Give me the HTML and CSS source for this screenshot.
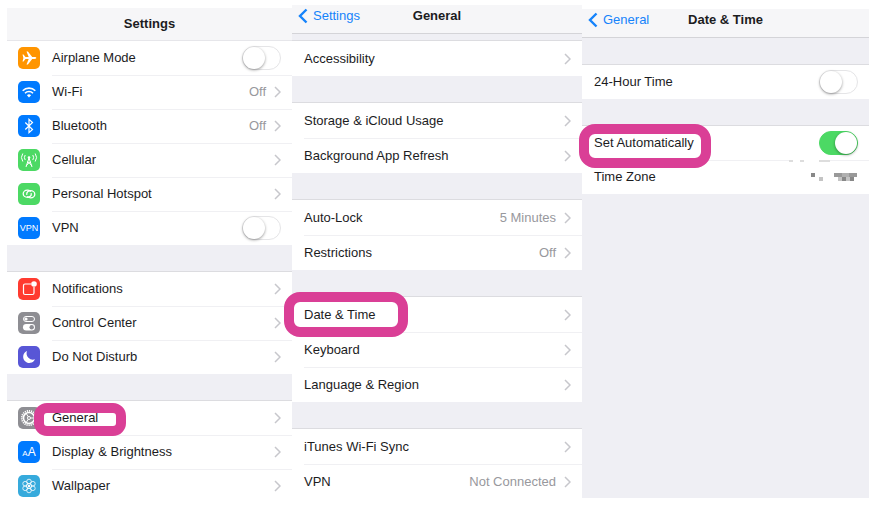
FILE: index.html
```
<!DOCTYPE html>
<html lang="en">
<head>
	<meta charset="utf-8">
	<title>Settings - Date &amp; Time</title>
	<link rel="stylesheet" href="styles.css">
</head>
<body>
	<svg class="defs" aria-hidden="true">
		<symbol id="chevron" viewBox="0 0 7 12"><path d="M1 1l5 5-5 5" fill="none" stroke="#c7c7cc" stroke-width="1.5"/></symbol>
		<symbol id="back" viewBox="0 0 10 16"><path d="M8.500 1.500L2 8l6.500 6.500" fill="none" stroke="#1583fb" stroke-width="2.400"/></symbol>
	</svg>
	<main class="screens">
		<section class="screen settings">
			<header class="bar">
				<h1>Settings</h1>
			</header>
			<ul class="list">
				<li>
					<svg class="icon orange" viewBox="0 0 22 22"><path fill="#fff" d="M4.500 7.500h1l2 2.600h3.200L8.500 4.500h1.400l4.300 5.600h2.300c1.100 0 1.800.4 1.800.9s-.7.900-1.800.9h-2.300l-4.300 5.600H8.500l2.200-5.600H7.500l-2 2.600h-1L5.400 11z"/></svg>
					<label for="airplane">Airplane Mode</label>
					<input class="switch" type="checkbox" id="airplane">
				</li>
				<li>
					<svg class="icon blue" viewBox="0 0 22 22"><g fill="none" stroke="#fff" stroke-width="1.600"><path d="M4.700 9.700a9 9 0 0 1 12.600 0"/><path d="M7 12.200a5.600 5.600 0 0 1 8 0"/></g><path fill="#fff" d="M8.900 14.300a3 3 0 0 1 4.200 0L11 16.400z"/></svg>
					<a href="#">Wi-Fi</a>
					<span class="value">Off</span>
					<svg class="chevron"><use href="#chevron"/></svg>
				</li>
				<li>
					<svg class="icon blue" viewBox="0 0 22 22"><path fill="none" stroke="#fff" stroke-width="1.200" d="M7.300 7.500l7.200 7-3.500 3.200V4.300l3.500 3.200-7.200 7"/></svg>
					<a href="#">Bluetooth</a>
					<span class="value">Off</span>
					<svg class="chevron"><use href="#chevron"/></svg>
				</li>
				<li>
					<svg class="icon green" viewBox="0 0 22 22"><g fill="none" stroke="#fff" stroke-width="1"><path d="M4.800 4.500a7 7 0 0 0 0 8M7.200 6a4.500 4.500 0 0 0 0 5M17.200 4.500a7 7 0 0 1 0 8M14.800 6a4.500 4.500 0 0 1 0 5M11 9L8 18M11 9l3 9M9.700 12.500l4 4M12.300 12.500l-4 4"/></g><circle cx="11" cy="8.500" r="1.300" fill="#fff"/></svg>
					<a href="#">Cellular</a>
					<svg class="chevron"><use href="#chevron"/></svg>
				</li>
				<li>
					<svg class="icon green" viewBox="0 0 22 22"><g fill="none" stroke="#fff" stroke-width="1.300" stroke-linecap="round"><path d="M13.200 10.600c.5 2.400-1.600 3.700-3.700 3.700-2.400 0-4.300-1.500-4.300-3.500S7 7.200 9.400 7.200c1.200 0 2.200.4 3 1"/><path d="M8.800 11.400c-.5-2.400 1.600-3.700 3.700-3.700 2.400 0 4.300 1.500 4.300 3.500s-1.800 3.600-4.200 3.600c-1.200 0-2.200-.4-3-1"/></g></svg>
					<a href="#">Personal Hotspot</a>
					<svg class="chevron"><use href="#chevron"/></svg>
				</li>
				<li>
					<span class="icon blue vpn">VPN</span>
					<label for="vpn">VPN</label>
					<input class="switch" type="checkbox" id="vpn">
				</li>
			</ul>
			<ul class="list">
				<li>
					<svg class="icon red" viewBox="0 0 22 22"><path fill="none" stroke="#fff" stroke-width="1.200" d="M13 6H7Q5.500 6 5.500 7.500v7.500Q5.500 16.500 7 16.500h7.500q1.500 0 1.500-1.500V9"/><circle cx="16" cy="6" r="2.800" fill="#fff"/></svg>
					<a href="#">Notifications</a>
					<svg class="chevron"><use href="#chevron"/></svg>
				</li>
				<li>
					<svg class="icon gray" viewBox="0 0 22 22"><rect x="5.500" y="4.500" width="11" height="5" rx="2.500" fill="none" stroke="#fff"/><circle cx="8" cy="7" r="1.600" fill="#fff"/><rect x="5" y="12" width="12" height="6.500" rx="3.200" fill="#fff"/><circle cx="13.700" cy="15.200" r="2.200" fill="#8e8e93"/></svg>
					<a href="#">Control Center</a>
					<svg class="chevron"><use href="#chevron"/></svg>
				</li>
				<li>
					<svg class="icon purple" viewBox="0 0 22 22"><path fill="#fff" d="M9 5a6.200 6.200 0 1 0 8 8.300A6.400 6.400 0 0 1 9 5z"/></svg>
					<a href="#">Do Not Disturb</a>
					<svg class="chevron"><use href="#chevron"/></svg>
				</li>
			</ul>
			<ul class="list">
				<li class="marked mark-general">
					<svg class="icon gray" viewBox="0 0 22 22"><g fill="none" stroke="#fff"><circle cx="11" cy="11" r="7.200" stroke-width="1.800" stroke-dasharray="1.200 .9"/><circle cx="11" cy="11" r="5.500" stroke-width="1.500"/><circle cx="11" cy="11" r="1.500"/><path d="M12.500 11H17M10.200 9.800L8 6M10.200 12.200L8 16"/></g></svg>
					<a href="#">General</a>
					<svg class="chevron"><use href="#chevron"/></svg>
				</li>
				<li>
					<span class="icon blue letters"><small>A</small>A</span>
					<a href="#">Display &amp; Brightness</a>
					<svg class="chevron"><use href="#chevron"/></svg>
				</li>
				<li>
					<svg class="icon cyan" viewBox="0 0 22 22"><g fill="none" stroke="#fff" stroke-width=".8"><circle cx="11" cy="6.500" r="2.300"/><circle cx="14.900" cy="8.700" r="2.300"/><circle cx="14.900" cy="13.300" r="2.300"/><circle cx="11" cy="15.500" r="2.300"/><circle cx="7.100" cy="13.300" r="2.300"/><circle cx="7.100" cy="8.700" r="2.300"/><circle cx="11" cy="11" r="2.500"/></g><circle cx="11" cy="11" r="1.200" fill="#fff"/></svg>
					<a href="#">Wallpaper</a>
					<svg class="chevron"><use href="#chevron"/></svg>
				</li>
			</ul>
		</section>

		<section class="screen general">
			<header class="bar">
				<a class="back" href="#"><svg><use href="#back"/></svg>Settings</a>
				<h1>General</h1>
			</header>
			<ul class="list">
				<li><a href="#">Accessibility</a><svg class="chevron"><use href="#chevron"/></svg></li>
			</ul>
			<ul class="list">
				<li><a href="#">Storage &amp; iCloud Usage</a><svg class="chevron"><use href="#chevron"/></svg></li>
				<li><a href="#">Background App Refresh</a><svg class="chevron"><use href="#chevron"/></svg></li>
			</ul>
			<ul class="list">
				<li><a href="#">Auto-Lock</a><span class="value">5 Minutes</span><svg class="chevron"><use href="#chevron"/></svg></li>
				<li><a href="#">Restrictions</a><span class="value">Off</span><svg class="chevron"><use href="#chevron"/></svg></li>
			</ul>
			<ul class="list">
				<li class="marked mark-date"><a href="#">Date &amp; Time</a><svg class="chevron"><use href="#chevron"/></svg></li>
				<li><a href="#">Keyboard</a><svg class="chevron"><use href="#chevron"/></svg></li>
				<li><a href="#">Language &amp; Region</a><svg class="chevron"><use href="#chevron"/></svg></li>
			</ul>
			<ul class="list">
				<li><a href="#">iTunes Wi-Fi Sync</a><svg class="chevron"><use href="#chevron"/></svg></li>
				<li><a href="#">VPN</a><span class="value">Not Connected</span><svg class="chevron"><use href="#chevron"/></svg></li>
			</ul>
		</section>

		<section class="screen date">
			<header class="bar">
				<a class="back" href="#"><svg><use href="#back"/></svg>General</a>
				<h1>Date &amp; Time</h1>
			</header>
			<ul class="list">
				<li>
					<label for="hours">24-Hour Time</label>
					<input class="switch" type="checkbox" id="hours">
				</li>
			</ul>
			<ul class="list">
				<li class="marked mark-auto">
					<label for="auto">Set Automatically</label>
					<input class="switch" type="checkbox" id="auto" checked>
				</li>
				<li>
					<a href="#">Time Zone</a>
					<!-- zone name is pixelated -->
					<svg class="zone" viewBox="0 0 72 34"><path fill="#fff" d="M7 0h26v2H7z"/><path fill="#ddd" d="M3 0h4v2H3zM14 0h4v2h-4zM33 0h11v2H33z"/><path fill="#888" d="M25 13h4v4h-4zM56 17h4v4h-4zM64 17h4v4h-4z"/><path fill="#c4c4c4" d="M33 17h4v4h-4zM52 17h4v4h-4zM60 17h4v4h-4z"/><path fill="#999" d="M48 13h8v4h-8zM63 13h8v4h-8z"/><path fill="#b0b0b0" d="M56 13h7v4h-7z"/></svg>
				</li>
			</ul>
		</section>
	</main>
</body>
</html>
```
FILE: styles.css
```
	*, *::before, *::after{
		box-sizing: border-box;
	}
	body{
		margin: 0;
		background: #fff;
		color: #1c1c1e;
		font: 13px/20px "Liberation Sans", Arial, sans-serif;
	}
	a{
		color: inherit;
		text-decoration: none;
	}
	.defs{
		display: none;
	}
	.screens{
		display: grid;
		grid-template-columns: 285fr 290fr 287fr;
		padding: 5px 10px 11px 7px;
	}
	.screen{
		background: #efeff4;
	}
	.settings{
		margin: 3px 0 -4px;
	}
	.date{
		margin: 4px 0 1px;
	}

	/* title bar */
	.bar{
		display: grid;
		grid-template-columns: 1fr auto 1fr;
		align-items: start;
		height: 29px;
		padding: 1px 6px 0;
		border-bottom: 1px solid #d4d4d8;
		background: #f6f6f8;
	}
	.settings .bar{
		height: 33px;
		padding-top: 6px;
		border-color: #e6e6ea;
	}
	.bar h1{
		grid-column: 2;
		margin: 0;
		font-size: 13px;
		font-weight: bold;
	}
	.back{
		display: flex;
		align-items: center;
		gap: 5px;
		color: #1583fb;
	}
	.back svg{
		width: 10px;
		height: 16px;
	}

	/* lists */
	.list{
		margin: 27px 0 0;
		padding: 0;
		list-style: none;
		background: #fff;
		box-shadow: 0 -1px #dcdce0;
	}
	.settings .bar + .list{
		margin-top: 0;
		box-shadow: none;
	}
	.general .bar + .list{
		margin-top: 7px;
	}
	.list li{
		position: relative;
		display: flex;
		align-items: center;
		height: 34px;
		padding: 0 11px 0 12px;
	}
	.general li{
		height: 35px;
	}
	.settings li{
		padding-left: 11px;
	}
	.list li + li{
		background: linear-gradient(#f0f0f3, #f0f0f3) 12px 0 / 100% 1px no-repeat;
	}
	.settings li + li{
		background-position: 45px 0;
	}
	.list a, .list label{
		flex: 1;
	}
	.value{
		color: #98989d;
	}
	.chevron{
		width: 7px;
		height: 12px;
		margin-left: 8px;
	}
	.zone{
		width: 72px;
		height: 34px;
	}

	/* icons */
	.icon{
		width: 22px;
		height: 22px;
		margin-right: 12px;
		border-radius: 5px;
		color: #fff;
		text-align: center;
		line-height: 22px;
	}
	.vpn{
		font-size: 9px;
	}
	.letters{
		font-size: 12px;
	}
	.letters small{
		font-size: 8px;
	}
	.orange{ background: #ff9500; }
	.blue{ background: #007aff; }
	.green{ background: #4cd964; }
	.red{ background: #ff3b30; }
	.gray{ background: #8e8e93; }
	.purple{ background: #5856d6; }
	.cyan{ background: #36aadc; }

	/* switches */
	.switch{
		appearance: none;
		display: flex;
		width: 39px;
		height: 24px;
		margin: 0;
		border: 1px solid #e5e5e7;
		border-radius: 12px;
		background: #fff;
	}
	.switch::before{
		content: "";
		width: 22px;
		height: 22px;
		border-radius: 50%;
		background: #fff;
		box-shadow: 0 1px 3px rgba(0,0,0,.4);
	}
	.switch:checked{
		justify-content: flex-end;
		border-color: #4cd964;
		background: #4cd964;
	}

	/* pink markers */
	.marked::after{
		content: "";
		position: absolute;
		z-index: 1;
		border: 10px solid #da3f96;
		border-radius: 16px;
		pointer-events: none;
	}
	.mark-general::after{
		top: 2px;
		left: 27px;
		width: 92px;
		height: 33px;
		border-radius: 13px;
	}
	.mark-date::after{
		top: -5px;
		left: -8px;
		width: 124px;
		height: 45px;
	}
	.mark-auto::after{
		top: -2px;
		left: -3px;
		width: 132px;
		height: 44px;
	}
```
